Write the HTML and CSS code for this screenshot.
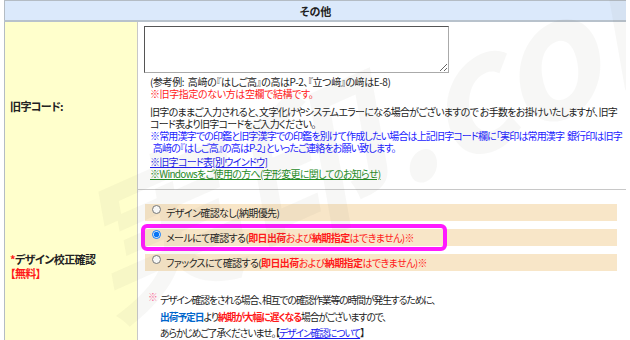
FILE: index.html
```html
<!DOCTYPE html>
<html lang="ja">
<head>
    <meta charset="UTF-8">
    <title>その他</title>
    <link rel="stylesheet" href="styles.css">
</head>
<body>
    <div class="wrap">
        <table class="form">
            <colgroup>
                <col class="col-label">
                <col>
            </colgroup>
            <tr>
                <th class="head" colspan="2">その他</th>
            </tr>
            <tr class="row-old">
                <th class="label">旧字コード:</th>
                <td class="field">
                    <textarea class="old-code"></textarea>
                    <p class="note first">(参考例:&nbsp; 高﨑の『はしご高』の高はP-2、『立つ﨑』の﨑はE-8)<br>
                        <span class="red">※旧字指定のない方は空欄で結構です。</span></p>
                    <p class="note">旧字のままご入力されると、文字化けやシステムエラーになる場合がございますので お手数をお掛けいたしますが、旧字<br>コード表より旧字コードをご入力ください。</p>
                    <p class="note blue">※常用漢字での印鑑と旧字漢字での印鑑を別けて作成したい場合は上記旧字コード欄に「実印は常用漢字&nbsp; 銀行印は旧字<br>&nbsp;&nbsp;高﨑の『はしご高』の高はP-2」といったご連絡をお願い致します。</p>
                    <p class="note links">
                        <a href="#" class="link-blue">※旧字コード表[別ウインドウ]</a><br>
                        <a href="#" class="link-green">※Windowsをご使用の方へ(字形変更に関してのお知らせ)</a>
                    </p>
                </td>
            </tr>
            <tr class="row-design">
                <th class="label"><span class="red">*</span>デザイン校正確認<br><span class="red">【無料】</span></th>
                <td class="field">
                    <div class="choices">
                        <label class="choice"><input type="radio" name="design">デザイン確認なし(納期優先)</label>
                        <label class="choice"><input type="radio" name="design" checked>メールにて確認する(<span class="red"><b>即日出荷</b>および<b>納期指定</b>はできません)※</span><span class="mark"></span></label>
                        <label class="choice"><input type="radio" name="design">ファックスにて確認する(<span class="red"><b>即日出荷</b>および<b>納期指定</b>はできません)※</span></label>
                    </div>
                    <div class="caution">
                        <span class="kome">※</span>
                        <p>デザイン確認をされる場合、相互での確認作業等の時間が発生するために、<br>
                            <b class="blue">出荷予定日</b>より<b class="red">納期が大幅に遅くなる</b>場合がございますので、<br>
                            あらかじめご了承くださいませ。【<a href="#" class="link-blue">デザイン確認について</a>】</p>
                    </div>
                </td>
            </tr>
        </table>
        <div class="stamp">実印.com</div>
    </div>
</body>
</html>
```

FILE: styles.css
```css
body {
    margin: 0;
    padding: 0 4px;
    background: #fff;
    font-family: "Noto Sans CJK JP", "Liberation Sans", sans-serif;
    font-size: 10px;
    letter-spacing: -0.6px;
    color: #222;
    font-feature-settings: "palt";
}
.wrap {
    position: relative;
    overflow: hidden;
    height: 340px;
}
.form {
    width: 623px;
    table-layout: fixed;
    border-collapse: collapse;
    border: 1px solid #b4bcc4;
}
.col-label {
    width: 133px;
}
.head {
    height: 19px;
    padding: 0;
    background: #dbe9fb;
    border-bottom: 2px solid #b8c2cc;
    font-weight: bold;
    font-size: 11px;
    letter-spacing: 0;
    text-align: center;
}
.label {
    padding: 0 0 0 5px;
    background: #ffffcc;
    border-right: 1px solid #c8c8c8;
    text-align: left;
    font-weight: bold;
    font-size: 11px;
    vertical-align: middle;
    line-height: 14px;
}
.field {
    padding: 4px 9px 0 6px;
    vertical-align: top;
    border-bottom: 1px solid #c8c8c8;
}
.row-old .field {
    padding-bottom: 9px;
}
.row-design .field {
    padding-top: 14px;
    border-bottom: none;
}
.old-code {
    display: block;
    width: 305px;
    height: 47px;
    margin: 0;
    padding: 0;
    box-sizing: border-box;
    border: 1px solid #aaa;
    border-top-color: #555;
    border-left-color: #555;
    resize: vertical;
}
.note {
    margin: 0;
    padding-left: 6px;
    line-height: 12px;
    white-space: nowrap;
    letter-spacing: -0.7px;
}
.note.first {
    margin-top: 3px;
    line-height: 11.5px;
    letter-spacing: -0.4px;
}
.note + .note {
    margin-top: 7px;
}
.note.blue {
    margin-top: 0;
    letter-spacing: -0.85px;
}
.red {
    color: #ff1a1a;
}
.blue {
    color: #1a1aff;
}
b.blue {
    color: #0066cc;
}
.note.links {
    margin-top: 2px;
}
.link-blue {
    color: #1a1aee;
}
.link-green {
    color: #1f8a1f;
}
.choices {
    display: flex;
    flex-direction: column;
    gap: 8px;
    padding-left: 1px;
}
.choice {
    position: relative;
    display: flex;
    align-items: center;
    height: 17px;
    padding-left: 4px;
    background: #f8e6c8;
    white-space: nowrap;
}
.choice input {
    width: 9px;
    height: 9px;
    margin: 0 5px 0 3px;
    position: relative;
    top: -3px;
}
.mark {
    position: absolute;
    left: -4px;
    top: -5px;
    width: 298px;
    height: 19px;
    border: 4px solid #ff19ff;
    border-radius: 6px;
}
.caution {
    display: flex;
    margin-top: 21px;
    padding-left: 4px;
    line-height: 16.5px;
    font-size: 9.8px;
    letter-spacing: -1.1px;
    white-space: nowrap;
}
.kome {
    color: #ff6fa0;
    width: 12px;
    margin-top: -3px;
}
.caution p {
    margin: 0;
}
.stamp {
    position: absolute;
    left: 30px;
    top: 150px;
    font-size: 160px;
    font-weight: bold;
    font-style: italic;
    letter-spacing: 0;
    color: rgba(120, 120, 100, 0.06);
    transform: rotate(-24deg);
    transform-origin: left top;
    white-space: nowrap;
    pointer-events: none;
}
```
